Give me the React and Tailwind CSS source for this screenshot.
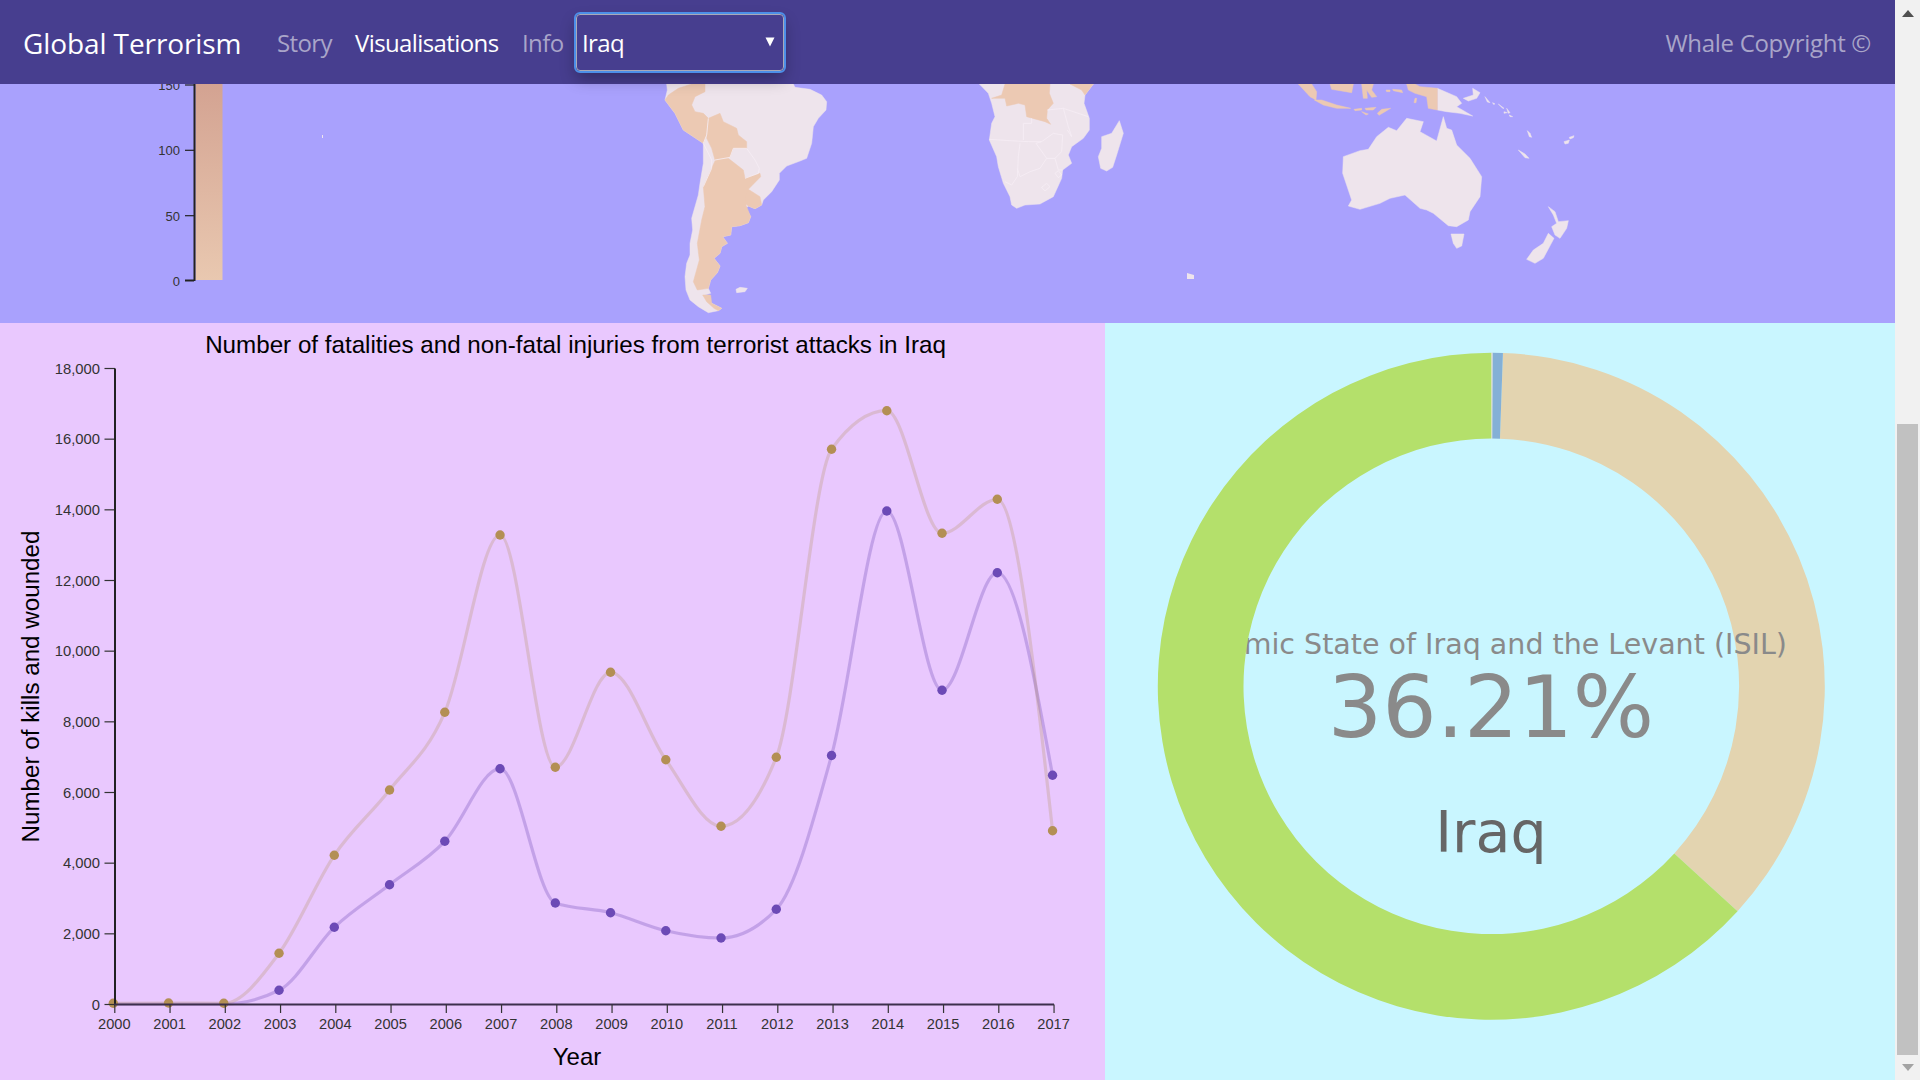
import React from "react";

const years = Array.from({ length: 18 }, (_, i) => 2000 + i);
const dotX = (i) => 113.3 + i * 55.25;
const tickX = (i) => 114.8 + i * 55.25;
const yTicks = [0, 2000, 4000, 6000, 8000, 10000, 12000, 14000, 16000, 18000];
const valueY = (v) => 1004.5 - (v / 18000) * 636;

const brownY = [1003.3, 1003, 1003.3, 953.3, 855.3, 790, 712.3, 535, 767.2, 672.3, 759.8, 826.3, 757.2, 449.3, 410.7, 533.3, 499.3, 830.7];
const purpleY = [1004, 1004, 1004, 990.3, 927.3, 884.7, 841.3, 768.7, 903, 912.7, 930.7, 938, 909.3, 755.5, 511, 690.3, 572.7, 775.3];

// same maths as d3.curveMonotoneX
const monotone = (ys) => {
  const h = 55.25;
  const n = ys.length;
  const slopes = ys.map((y, i) => {
    if (i === 0 || i === n - 1) return null;
    const s0 = (y - ys[i - 1]) / h;
    const s1 = (ys[i + 1] - y) / h;
    const p = (s0 + s1) / 2;
    return (Math.sign(s0) + Math.sign(s1)) * Math.min(Math.abs(s0), Math.abs(s1), 0.5 * Math.abs(p));
  });
  slopes[0] = (3 * (ys[1] - ys[0]) / h - slopes[1]) / 2;
  slopes[n - 1] = (3 * (ys[n - 1] - ys[n - 2]) / h - slopes[n - 2]) / 2;
  const dx = h / 3;
  let d = `M${dotX(0)},${ys[0]}`;
  for (let i = 0; i < n - 1; i++) {
    d += `C${dotX(i) + dx},${ys[i] + dx * slopes[i]} ${dotX(i + 1) - dx},${ys[i + 1] - dx * slopes[i + 1]} ${dotX(i + 1)},${ys[i + 1]}`;
  }
  return d;
};

const CX = 1491.3;
const CY = 686.3;
const R = 333.5;
const RI = 247.8;

const arc = (from, to) => {
  const pt = (r, a) => {
    const rad = (a * Math.PI) / 180;
    return `${CX + r * Math.sin(rad)},${CY - r * Math.cos(rad)}`;
  };
  const large = to - from > 180 ? 1 : 0;
  return `M${pt(R, from)}A${R},${R} 0 ${large} 1 ${pt(R, to)}L${pt(RI, to)}A${RI},${RI} 0 ${large} 0 ${pt(RI, from)}Z`;
};

// map shapes are traced from 3x crops, so each group has an origin
const shape = (ox, oy, pts) =>
  pts
    .trim()
    .split(/\s+/)
    .map((p) => {
      const [x, y] = p.split(",").map(Number);
      return `${ox + x / 3},${oy + y / 3}`;
    })
    .join(" ");

const LIGHT = "#eee4ec";
const PEACH = "#ecc9b3";

const mapShapes = [
  // south america
  [640, 80, LIGHT, "80,12 460,12 465,22 510,28 545,45 560,65 558,90 535,115 520,140 515,190 500,235 480,243 440,258 418,280 418,300 395,335 370,360 365,375 345,386 325,378 318,385 332,410 325,428 300,437 275,440 272,465 248,470 262,490 245,500 240,520 222,535 240,558 232,578 212,600 205,625 212,640 195,645 215,670 245,685 235,692 205,698 175,680 150,660 138,630 135,590 140,550 150,525 150,490 158,450 155,415 175,345 180,310 190,250 190,190 130,150 105,100 75,60 82,30"],
  [640, 80, PEACH, "115,25 155,12 195,12 195,35 165,50 155,75 165,95 190,100 205,115 200,165 190,190 130,150 105,100 75,60 85,45"],
  [640, 80, PEACH, "205,115 240,100 250,125 290,145 295,165 320,185 320,205 280,205 270,232 225,240 215,205 200,175"],
  [640, 80, PEACH, "230,232 265,235 310,270 315,295 360,280 362,290 325,328 318,375 332,410 325,428 300,437 275,440 272,465 248,470 262,490 245,500 240,520 222,535 240,558 232,578 212,600 205,625 172,630 160,605 178,540 172,490 185,420 195,380 190,320 215,265"],
  [640, 80, PEACH, "188,645 212,645 215,670 245,685 235,692 222,685 200,665"],
  [640, 80, PEACH, "325,328 360,350 365,375 345,386 325,378 315,370 318,345"],
  [640, 80, LIGHT, "288,628 300,622 322,625 315,635 290,638"],
  // africa
  [960, 80, LIGHT, "58,12 400,12 375,45 372,70 388,115 388,150 370,175 335,200 325,225 335,250 308,270 305,295 280,350 240,372 195,375 170,385 155,375 150,350 130,310 115,260 110,230 88,180 95,130 105,110 95,70 85,40"],
  [960, 80, PEACH, "135,12 270,12 268,40 280,70 262,90 260,115 272,133 255,125 200,110 195,75 175,70 140,78 135,55 95,55 125,45"],
  [960, 80, PEACH, "330,12 400,12 375,45 365,30"],
  [960, 80, LIGHT, "478,122 490,160 470,225 458,262 440,273 422,265 415,230 425,205 425,170 455,160"],
  // oceania
  [1280, 80, LIGHT, "190,230 240,212 265,208 290,170 325,142 350,152 380,115 430,125 420,155 470,183 490,110 500,145 515,150 530,195 570,235 605,290 600,350 570,395 565,420 530,440 505,437 460,400 440,390 420,385 375,345 330,355 300,370 240,388 205,378 215,360 188,280"],
  [1280, 80, LIGHT, "513,462 552,462 545,498 530,505 520,490"],
  [1280, 80, LIGHT, "805,380 825,395 835,425 865,422 860,445 840,475 825,465 815,440 830,430 820,405"],
  [1280, 80, LIGHT, "805,460 822,475 790,535 765,550 740,538 760,510 790,490"],
  [1280, 80, LIGHT, "472,25 530,50 545,70 530,80 578,108 540,100 500,95 472,90"],
  [1280, 80, PEACH, "380,12 405,12 420,20 472,25 472,90 445,85 440,50 405,40 385,30"],
  [1280, 80, PEACH, "55,12 95,12 110,35 108,60 90,50"],
  [1280, 80, PEACH, "103,60 125,60 170,75 212,85 170,85 130,75"],
  [1280, 80, PEACH, "150,12 220,12 215,38 180,32 155,28"],
  [1280, 80, PEACH, "245,12 280,12 275,30 290,50 275,52 260,30 262,55 250,55"],
  [1280, 80, PEACH, "318,30 330,30 330,35 320,35"],
  [1280, 80, PEACH, "338,28 365,30 368,38 340,32"],
  [1280, 80, PEACH, "222,88 245,85 245,90 225,92"],
  [1280, 80, PEACH, "255,85 288,82 280,90 258,90"],
  [1280, 80, PEACH, "245,95 265,102 258,105"],
  [1280, 80, PEACH, "292,100 305,88 332,85 310,98 297,106"],
  [1280, 80, PEACH, "405,55 410,55 408,68 402,68"],
  [1280, 80, LIGHT, "550,55 580,45 578,25 600,38 590,55 565,63"],
  [1280, 80, LIGHT, "615,50 630,68 622,66"],
  [1280, 80, LIGHT, "655,72 672,85 668,85"],
  [1280, 80, LIGHT, "680,85 690,98 685,100"],
  [1280, 80, LIGHT, "672,95 682,98 672,100"],
  [1280, 80, LIGHT, "688,105 698,110 690,110"],
  [1280, 80, LIGHT, "638,68 645,72 640,73"],
  [1280, 80, LIGHT, "742,152 750,160 755,172 748,170"],
  [1280, 80, LIGHT, "715,210 735,222 747,235 735,233"],
  [1280, 80, LIGHT, "852,185 868,180 865,190 855,192"],
  [1280, 80, LIGHT, "868,172 882,167 880,173 870,177"],
];

// country borders, thin and pale
const borders = [
  [640, 80, "205,115 200,165 190,190"],
  [640, 80, "225,240 270,232"],
  [640, 80, "270,232 280,205 320,205 345,240 358,265 355,280 315,295"],
  [640, 80, "190,190 215,240 215,265 190,320"],
  [960, 80, "88,178 150,182 205,185 245,185"],
  [960, 80, "190,130 190,180"],
  [960, 80, "190,130 215,130 215,115"],
  [960, 80, "228,190 245,185 280,160 308,165 305,215 285,235 260,235 228,190"],
  [960, 80, "180,190 175,230 172,290 155,315 135,305"],
  [960, 80, "172,265 180,290 210,275 240,265 260,235"],
  [960, 80, "285,235 295,270 308,270"],
  [960, 80, "262,90 310,85 385,110"],
  [960, 80, "310,85 325,140 335,170 322,150"],
  [960, 80, "245,322 260,310 270,320 255,333 245,322"],
  [960, 80, "285,280 295,272 305,285 295,293 285,280"],
];

const NavBar = () => (
  <nav className="flex h-[84px] items-center bg-[#473e8f] pl-[23px] pr-[24px] font-['Open_Sans',sans-serif] text-[24px] relative z-10">
    <span className="w-[254px] pt-[2px] text-[28px] tracking-[-0.1px] text-white">Global Terrorism</span>
    <span className="w-[78px] pt-[2px] text-[#a9a5c9] tracking-[-0.6px]">Story</span>
    <span className="w-[167px] pt-[2px] text-white tracking-[-0.6px]">Visualisations</span>
    <span className="w-[54px] pt-[2px] text-[#a9a5c9] tracking-[-0.6px]">Info</span>
    <div className="relative h-[57px] w-[208px] rounded-[4px] shadow-[0_8px_16px_rgba(0,0,0,0.3)]">
      <select
        defaultValue="Iraq"
        className="h-full w-full appearance-none rounded-[4px] border border-[#a9a9b8] bg-[#473e8f] pl-[5px] pt-[2px] text-white outline-2 outline-[#4d8fe8] tracking-[-0.6px]"
      >
        <option>Iraq</option>
      </select>
      <svg className="absolute right-[9px] top-[23px]" width="10" height="10" viewBox="0 0 10 10">
        <path d="M0.5 0.5H9.5L5 9.5Z" fill="#ffffff" />
      </svg>
    </div>
    <span className="ml-auto pt-[2px] text-[#a9a5c9] tracking-[-0.3px]">Whale Copyright ©</span>
  </nav>
);

const WorldMap = () => (
  <div className="h-[239px] bg-[#a9a1fd]">
    <svg className="block" width="1895" height="239" viewBox="0 84 1895 239" fontFamily="'Liberation Sans', sans-serif">
      <defs>
        <linearGradient id="legend" x1="0" y1="0" x2="0" y2="1">
          <stop offset="0" stopColor="#d3a291" />
          <stop offset="1" stopColor="#e9c8b0" />
        </linearGradient>
      </defs>
      <rect x="195.5" y="80" width="27" height="200" fill="url(#legend)" />
      <path d="M194.5,80V281" stroke="#222" strokeWidth="2" fill="none" />
      {[[150, 85], [100, 150.3], [50, 215.7], [0, 280.5]].map(([label, y]) => (
        <g key={label}>
          <path d={`M185,${y}H194`} stroke="#222" strokeWidth={label === 0 ? 2 : 1.2} />
          <text x="180" y={y + 5} textAnchor="end" fontSize="13" fill="#333">
            {label}
          </text>
        </g>
      ))}
      <rect x="322" y="135" width="1" height="3" fill="#eee4ec" />
      {mapShapes.map(([ox, oy, fill, pts], i) => (
        <polygon key={i} points={shape(ox, oy, pts)} fill={fill} stroke={fill} strokeWidth="0.5" />
      ))}
      {borders.map(([ox, oy, pts], i) => (
        <polyline key={i} points={shape(ox, oy, pts)} fill="none" stroke="#f6eef5" strokeWidth="0.8" />
      ))}
      <polygon points="1187,273 1194,275 1194,279 1187,279" fill={LIGHT} />
    </svg>
  </div>
);

const LineChart = () => (
  <div className="h-[757px] w-[1105px] bg-[#e9c8fe]">
    <svg className="block" width="1105" height="757" viewBox="0 323 1105 757" fontFamily="'Liberation Sans', sans-serif">
      <text x="575.5" y="353" textAnchor="middle" fontSize="24.2" fill="#000">
        Number of fatalities and non-fatal injuries from terrorist attacks in Iraq
      </text>
      <text transform="translate(38.5,686.5) rotate(-90)" textAnchor="middle" fontSize="24.2" fill="#000">
        Number of kills and wounded
      </text>
      <text x="577" y="1065" textAnchor="middle" fontSize="24" fill="#000">
        Year
      </text>

      <path d={monotone(purpleY)} fill="none" stroke="#6c4ab6" strokeWidth="3.2" opacity="0.3" />
      <path d={monotone(brownY)} fill="none" stroke="#b38f54" strokeWidth="3.2" opacity="0.26" />
      {purpleY.slice(3).map((y, i) => (
        <circle key={i} cx={dotX(i + 3)} cy={y} r="4.7" fill="#6c4ab6" />
      ))}
      {brownY.map((y, i) => (
        <circle key={i} cx={dotX(i)} cy={y} r="4.7" fill="#b38f54" />
      ))}

      {yTicks.map((v) => (
        <g key={v}>
          <path d={`M104.5,${valueY(v)}H115`} stroke="#333" strokeWidth="1.2" />
          <text x="100" y={valueY(v) + 5} textAnchor="end" fontSize="14.8" fill="#333">
            {v.toLocaleString("en-US")}
          </text>
        </g>
      ))}
      <path d="M115,368.5V1005" stroke="#222" strokeWidth="2" fill="none" />
      <path d="M114,1004.5H1054" stroke="#3d2f4d" strokeWidth="2" fill="none" />
      {years.map((y, i) => (
        <g key={y}>
          <path d={`M${tickX(i)},1004.5V1013`} stroke="#333" strokeWidth="1.2" />
          <text x={tickX(i) - 0.5} y="1029" textAnchor="middle" fontSize="14.6" fill="#333">
            {y}
          </text>
        </g>
      ))}
    </svg>
  </div>
);

const Donut = () => (
  <div className="h-[757px] flex-1 bg-[#c9f6ff]">
    <svg className="block" width="790" height="757" viewBox="1105 323 790 757" fontFamily="'DejaVu Sans', sans-serif">
      <path d={arc(2, 132.4)} fill="#e3d4b0" />
      <path d={arc(0.2, 2)} fill="#84b0d6" />
      <path d={arc(0, 0.2)} fill="#f0d8d0" />
      <text x="1491" y="653.5" textAnchor="middle" fontSize="28.5" fill="#8a8a8a">
        Islamic State of Iraq and the Levant (ISIL)
      </text>
      <text x="1491" y="737" textAnchor="middle" fontSize="85.6" fill="#8a8a8a">
        36.21%
      </text>
      <text x="1491" y="852" textAnchor="middle" fontSize="57" fill="#666">
        Iraq
      </text>
      <path d={arc(132.4, 360)} fill="#b4e06b" />
    </svg>
  </div>
);

const ScrollBar = () => (
  <div className="flex h-screen w-[25px] flex-col items-center bg-[#f1f1f1]">
    <svg className="mt-[9px] shrink-0" width="14" height="9" viewBox="0 0 14 9">
      <path d="M7 1L13 8H1Z" fill="#505050" />
    </svg>
    <div className="mt-[406px] w-[21px] flex-1 bg-[#c1c1c1]" />
    <svg className="my-[8px] shrink-0" width="14" height="9" viewBox="0 0 14 9">
      <path d="M7 8L13 1H1Z" fill="#a3a3a3" />
    </svg>
  </div>
);

export default function App() {
  return (
    <div className="flex h-screen w-full overflow-hidden">
      <main className="flex w-[1895px] flex-col">
        <NavBar />
        <WorldMap />
        <div className="flex">
          <LineChart />
          <Donut />
        </div>
      </main>
      <ScrollBar />
    </div>
  );
}
